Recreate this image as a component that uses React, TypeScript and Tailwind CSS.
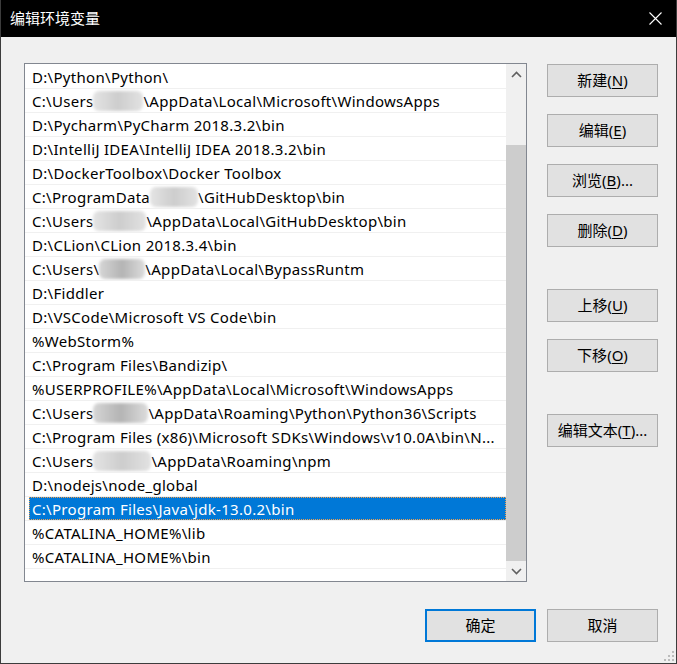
import React from "react";

const F = { fontFamily: '"Noto Sans", "Noto Sans CJK SC", sans-serif' };

function Blob({ w, dark }: { w: number; dark?: boolean }) {
  return (
    <span
      className={
        "inline-block h-[20px] align-middle rounded-[6px] blur-[1.5px] " +
        (dark
          ? "bg-gradient-to-r from-[#d6d6d6] via-[#b4b4b4] to-[#dcdcdc]"
          : "bg-gradient-to-r from-[#e4e4e4] via-[#cdcdcd] to-[#e2e2e2]")
      }
      style={{ width: w }}
    />
  );
}

type Row = React.ReactNode;

const rows: Row[] = [
  "D:\\Python\\Python\\",
  <>C:\Users<Blob w={50} />\AppData\Local\Microsoft\WindowsApps</>,
  "D:\\Pycharm\\PyCharm 2018.3.2\\bin",
  "D:\\IntelliJ IDEA\\IntelliJ IDEA 2018.3.2\\bin",
  "D:\\DockerToolbox\\Docker Toolbox",
  <>C:\ProgramData<Blob w={48} />\GitHubDesktop\bin</>,
  <>C:\Users<Blob w={53} />\AppData\Local\GitHubDesktop\bin</>,
  "D:\\CLion\\CLion 2018.3.4\\bin",
  <>C:\Users\<Blob w={46} dark />\AppData\Local\BypassRuntm</>,
  "D:\\Fiddler",
  "D:\\VSCode\\Microsoft VS Code\\bin",
  "%WebStorm%",
  "C:\\Program Files\\Bandizip\\",
  "%USERPROFILE%\\AppData\\Local\\Microsoft\\WindowsApps",
  <>C:\Users<Blob w={55} dark />\AppData\Roaming\Python\Python36\Scripts</>,
  "C:\\Program Files (x86)\\Microsoft SDKs\\Windows\\v10.0A\\bin\\N...",
  <>C:\Users<Blob w={58} />\AppData\Roaming\npm</>,
  "D:\\nodejs\\node_global",
  "C:\\Program Files\\Java\\jdk-13.0.2\\bin",
  "%CATALINA_HOME%\\lib",
  "%CATALINA_HOME%\\bin",
];

function Btn({
  label,
  k,
  tail,
  primary,
}: {
  label: string;
  k: string;
  tail?: string;
  primary?: boolean;
}) {
  return (
    <div
      className={
        "w-[111px] h-[33px] flex items-center justify-center bg-[#e1e1e1] text-[15px] text-black " +
        (primary ? "border-2 border-[#0078d7]" : "border border-[#adadad]")
      }
    >
      <span>
        {label}
        {k && (
          <>
            (<span className="underline underline-offset-2">{k}</span>)
          </>
        )}
        {tail}
      </span>
    </div>
  );
}

export default function App() {
  return (
    <div
      className="relative w-[677px] h-[664px] flex flex-col bg-[#f0f0f0] border-x border-b border-[#3c3c3c] overflow-hidden"
      style={F}
    >
      {/* title bar */}
      <div className="h-[37px] shrink-0 bg-black flex items-center justify-between pl-[9px] pr-[14px]">
        <span className="text-white text-[15px] leading-none">编辑环境变量</span>
        <svg width="13" height="13" viewBox="0 0 13 13">
          <path d="M0.5 0.5 L12.5 12.5 M12.5 0.5 L0.5 12.5" stroke="#fff" strokeWidth="1.1" />
        </svg>
      </div>

      <div className="flex-1 flex flex-col pt-[26px] pl-[23px] pr-[18px]">
        <div className="flex">
          {/* list box */}
          <div className="w-[503px] h-[519px] border border-[#828790] bg-white flex">
            <div className="flex-1 pt-[1px] text-[15px] tracking-[0.3px] text-black">
              {rows.map((r, i) => {
                const sel = i === 18;
                return (
                  <div key={i} className="h-[24px] border-b border-[#f0f0f0] pl-[4px]">
                    <div
                      className={
                        "h-full pl-[3px] pt-[1px] flex items-center whitespace-nowrap overflow-hidden " +
                        (sel ? "bg-[#0078d7] text-white outline outline-1 outline-dotted outline-[#f0a050] -outline-offset-1" : "")
                      }
                    >
                      {r}
                    </div>
                  </div>
                );
              })}
            </div>
            {/* scrollbar */}
            <div className="w-[20px] bg-[#f0f0f0] flex flex-col">
              <div className="h-[20px] flex items-center justify-center">
                <svg width="11" height="7" viewBox="0 0 11 7">
                  <path d="M1 6 L5.5 1.5 L10 6" fill="none" stroke="#606060" strokeWidth="1.6" />
                </svg>
              </div>
              <div className="flex-1 flex flex-col pt-[61px]">
                <div className="flex-1 bg-[#cdcdcd]" />
              </div>
              <div className="h-[20px] flex items-center justify-center">
                <svg width="11" height="7" viewBox="0 0 11 7">
                  <path d="M1 1 L5.5 5.5 L10 1" fill="none" stroke="#606060" strokeWidth="1.6" />
                </svg>
              </div>
            </div>
          </div>

          {/* right column buttons */}
          <div className="ml-[20px] flex flex-col pt-[1px]">
            <Btn label="新建" k="N" />
            <div className="h-[17px]" />
            <Btn label="编辑" k="E" />
            <div className="h-[17px]" />
            <Btn label="浏览" k="B" tail="..." />
            <div className="h-[17px]" />
            <Btn label="删除" k="D" />
            <div className="h-[42px]" />
            <Btn label="上移" k="U" />
            <div className="h-[17px]" />
            <Btn label="下移" k="O" />
            <div className="h-[42px]" />
            <Btn label="编辑文本" k="T" tail="..." />
          </div>
        </div>

        <div className="mt-[27px] flex justify-end gap-[11px]">
          <Btn label="确定" k="" primary />
          <Btn label="取消" k="" />
        </div>
      </div>

      {/* resize grip */}
      <svg className="absolute right-[1px] bottom-[1px]" width="12" height="12" viewBox="0 0 12 12">
        <rect x="9" y="1" width="2" height="2" fill="#bcbcbc" />
        <rect x="9" y="5" width="2" height="2" fill="#bcbcbc" />
        <rect x="5" y="5" width="2" height="2" fill="#bcbcbc" />
        <rect x="9" y="9" width="2" height="2" fill="#bcbcbc" />
        <rect x="5" y="9" width="2" height="2" fill="#bcbcbc" />
        <rect x="1" y="9" width="2" height="2" fill="#bcbcbc" />
      </svg>
    </div>
  );
}
